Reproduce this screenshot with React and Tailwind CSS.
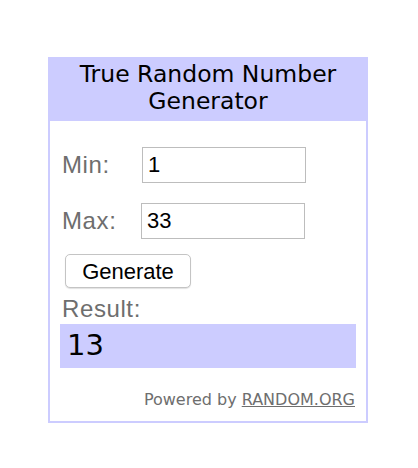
import { useState } from 'react';

const App = () => {
  const [min, setMin] = useState('1');
  const [max, setMax] = useState('33');
  const [result, setResult] = useState('13');

  // Pick a number between min and max
  const handleGenerate = () => {
    const lo = parseInt(min, 10);
    const hi = parseInt(max, 10);
    if (isNaN(lo) || isNaN(hi) || hi < lo) return;
    setResult(String(lo + Math.floor(Math.random() * (hi - lo + 1))));
  };

  return (
    <div className="min-h-[468px] w-[418px] bg-white pt-[57px] pl-[48px]">
      <div className="w-[320px] h-[366px] border-2 border-[#ccccff] flex flex-col">
        {/* Header */}
        <div className="bg-[#ccccff] h-[62px] pt-[2px] text-center text-black text-[23.5px] leading-[27px] font-['DejaVu_Sans',Verdana,sans-serif]">
          True Random Number
          <br />
          Generator
        </div>

        <div className="flex-1 flex flex-col px-[10px] font-['Liberation_Sans',Arial,sans-serif]">
          {/* Min */}
          <div className="flex items-center mt-[26px]">
            <label className="w-[82px] pl-[2px] text-[24px] text-[#6e6e6e] tracking-[0.6px]">Min:</label>
            <input
              type="text"
              value={min}
              onChange={(e) => setMin(e.target.value)}
              className="w-[164px] h-[36px] border border-[#bdbdbd] px-[5px] text-[22px] text-black outline-none"
            />
          </div>

          {/* Max */}
          <div className="flex items-center mt-[20px]">
            <label className="w-[81px] pl-[2px] text-[24px] text-[#6e6e6e] tracking-[0.6px]">Max:</label>
            <input
              type="text"
              value={max}
              onChange={(e) => setMax(e.target.value)}
              className="w-[164px] h-[36px] border border-[#bdbdbd] px-[5px] text-[22px] text-black outline-none"
            />
          </div>

          <div className="mt-[15px] pl-[5px]">
            <button
              onClick={handleGenerate}
              className="w-[126px] h-[34px] rounded-[5px] border border-[#c4c4c4] bg-white text-[22px] text-black shadow-[0_1px_1px_rgba(0,0,0,0.12)]"
            >
              Generate
            </button>
          </div>

          <div className="mt-[5px] pl-[2px] text-[24px] leading-[31px] text-[#6e6e6e] tracking-[0.6px]">Result:</div>

          <div className="w-[296px] h-[44px] bg-[#ccccff] pl-[7px] flex items-center text-[29px] text-black font-['DejaVu_Sans',Verdana,sans-serif]">
            {result}
          </div>

          <div className="mt-auto mb-[9px] text-right pr-[1px] text-[16px] text-[#6e6e6e] font-['DejaVu_Sans',Verdana,sans-serif]">
            Powered by <a href="#" className="underline text-[#6e6e6e]">RANDOM.ORG</a>
          </div>
        </div>
      </div>
    </div>
  );
};

export default App;
